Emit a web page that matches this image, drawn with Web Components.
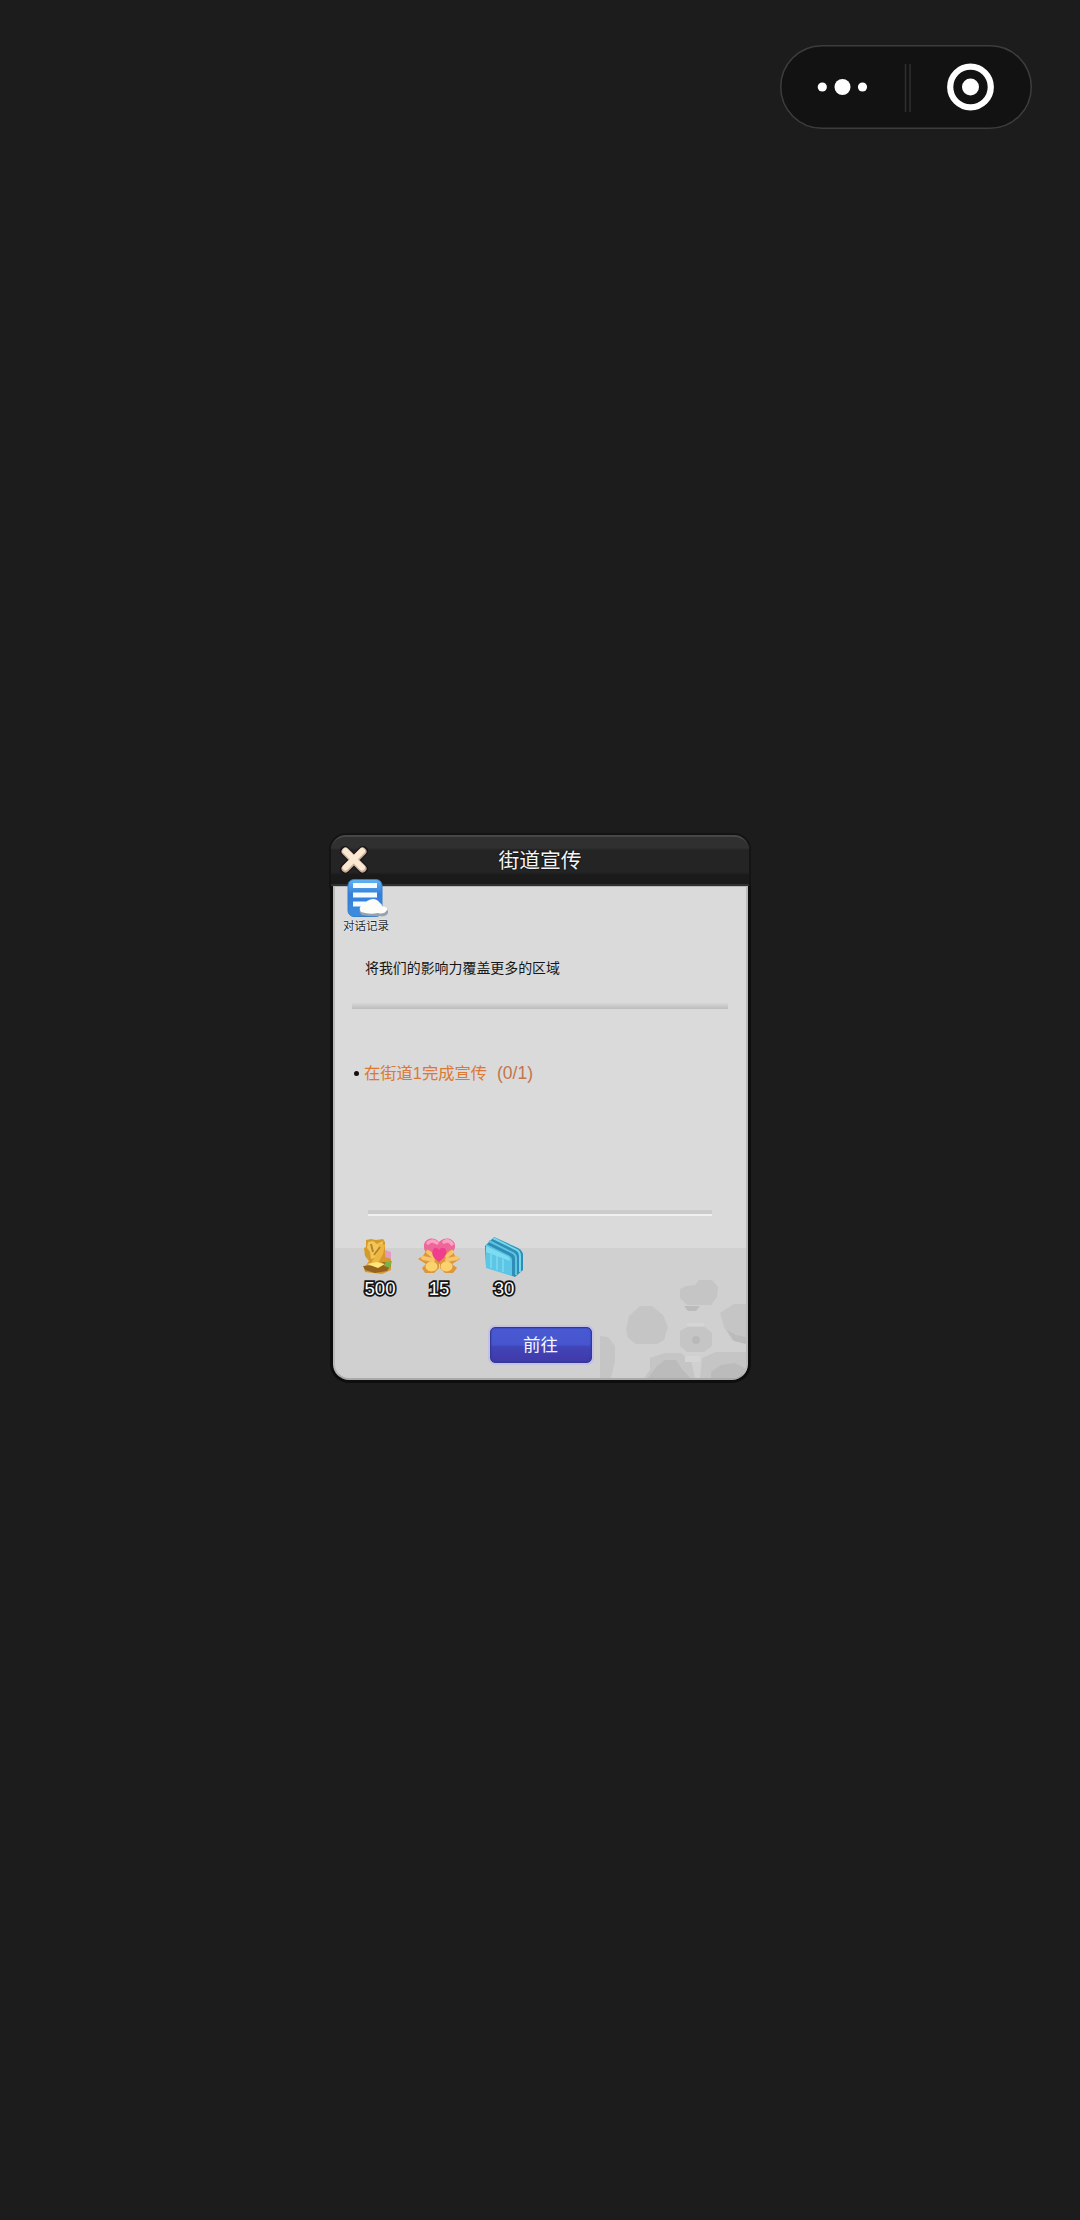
<!DOCTYPE html>
<html lang="zh-CN">
<head>
<meta charset="utf-8">
<title>街道宣传</title>
<style>
html,body{margin:0;background:#1c1c1c}
body{width:1080px;height:2220px;overflow:hidden;font-family:"Liberation Sans","Noto Sans CJK SC",sans-serif}
</style>
</head>
<body>
<quest-screen>
  <mini-capsule slot="top"></mini-capsule>
  <quest-dialog>
    <span slot="title">街道宣传</span>
    <dialog-log slot="log">对话记录</dialog-log>
    <span slot="desc">将我们的影响力覆盖更多的区域</span>
    <quest-goal slot="goal">在街道1完成宣传<span slot="count">(0/1)</span></quest-goal>
    <quest-reward slot="rewards" kind="star" style="width:56px">500</quest-reward>
    <quest-reward slot="rewards" kind="heart" style="width:56px;margin-left:3px">15</quest-reward>
    <quest-reward slot="rewards" kind="book" style="width:56px;margin-left:9px">30</quest-reward>
    <go-button slot="action">前往</go-button>
  </quest-dialog>
</quest-screen>
<script>
const define = (name, html, setup) => customElements.define(name, class extends HTMLElement {
  constructor() {
    super();
    this.attachShadow({mode: "open"}).innerHTML = html;
  }
  connectedCallback() { if (setup) setup(this); }
});

define("quest-screen", `<style>
:host{display:flex;flex-direction:column;align-items:center;width:1080px;height:2220px;background:#1c1c1c}
.top{display:flex;justify-content:flex-end;align-self:stretch;padding:45px 48px 0 0;height:789px}
</style><div class="top"><slot name="top"></slot></div><slot></slot>`);

define("mini-capsule", `<style>
:host{display:block;width:252px;height:84px}
svg{display:block}
</style><svg width="252" height="84" viewBox="0 0 252 84">
<rect x=".75" y=".75" width="250.500" height="82.500" rx="41.250" fill="#121212" stroke="#3d3d3d" stroke-width="1.500"/>
<g fill="#fff"><circle cx="42.300" cy="42" r="4.600"/><circle cx="62.500" cy="42" r="8"/><circle cx="82.500" cy="42" r="4.600"/><circle cx="190.500" cy="42" r="8.500"/></g>
<path d="M125.500 19v48M130 19v48" stroke="#2f2f2f" stroke-width="1.500"/>
<circle cx="190.500" cy="42" r="20.300" fill="none" stroke="#fff" stroke-width="6.200"/></svg>`);

define("quest-dialog", `<style>
:host{display:flex;flex-direction:column;width:418px;height:545px;margin-top:1px}
header{box-sizing:border-box;height:51px;flex:none;display:grid;grid-template-columns:48px 1fr 48px;align-items:center;border-radius:15px 15px 0 0;background:linear-gradient(#303030 0 11px,#242424 13px 35px,#1a1a1a 38px);border-top:2px solid #474747;border-bottom:2px solid #303030;box-shadow:0 0 0 2px #141414;color:#f4f4f4;font-size:20.800px;line-height:28px}
header svg{display:block;margin-left:8px;margin-top:-2px}
.title{text-align:center;text-shadow:0 0 2px #000}
main{box-sizing:border-box;position:relative;isolation:isolate;flex:1;width:415px;margin-left:2px;border:2px solid #b9b9b9;border-top-width:1px;border-bottom-color:#aaa;border-radius:0 0 16px 16px;background:linear-gradient(#dadada 0 361px,#d0d0d0 361px);box-shadow:-3px 0 #0e0e0e,3px 0 #0e0e0e,0 3px #0e0e0e,-2px 2px #0e0e0e,2px 2px #0e0e0e;display:flex;flex-direction:column}
.log{height:72px;padding-left:6px}
.log ::slotted(*){margin-top:-10px}
.desc{height:44px;padding-left:30px;font-size:13.930px;line-height:18px;color:#161616;white-space:nowrap}
.log,.desc,.r1,.r2,.rewards{flex:none;box-sizing:border-box}
.r1{height:6px;width:376px;margin-left:17px;background:linear-gradient(#d6d6d6,#bdbdbd)}
.goal{box-sizing:border-box;height:201px;flex:none;padding:54px 0 0 17px}
.r2{height:6px;width:344px;margin-left:33px;background:#cbcbcb;border-bottom:2px solid #efefef}
.rewards{display:flex;padding:15px 0 0 17px;height:87px}
.action{display:flex;justify-content:center;padding-top:24px}
.art{position:absolute;right:0;bottom:0;z-index:-1;border-bottom-right-radius:14px}
</style>
<header><svg width="30" height="30" viewBox="0 0 30 30"><path d="M6 6L24 24M24 6L6 24" stroke="#18111a" stroke-width="10" stroke-linecap="round"/><path d="M6.500 6.500L23.500 23.500M23.500 6.500L6.500 23.500" stroke="#c6b098" stroke-width="8" stroke-linecap="round"/><path d="M6.500 6L23 22.500M23 6L6.500 22.500" stroke="#fae8d2" stroke-width="6" stroke-linecap="round"/></svg><div class="title"><slot name="title"></slot></div></header>
<main>
<svg class="art" width="150" height="104" viewBox="0 0 150 104"><g fill="#c5c5c5"><path d="M84 15l6-3 9-1 4-5h13l6 7-1 10-6 8H91l-7-7zM30 56l3-14 11-10h12l11 9 5 12-4 13-7 4H40l-8-6zM124 39l14-9h12v40l-14-4-8-13zM84 57l7-4h18l7 6v13l-8 6H91l-7-6z"/><path d="M4 62l8 1 7 9v15l-4 17H4zM54 84l15-5h16l10 8 4 17H48l6-8zM106 84l14-6h30v26h-46z"/></g><circle cx="100" cy="66" r="4" fill="#b9b9b9"/><path d="M88 32h16l-4 5h-8zM131 56l9 5 10 2v7l-12-3zM61 92l8-6h11l6 9 8 9H52zM115 98l10-7 14-2 11 6v9h-35z" fill="#bbb"/><path d="M91 49h17v3H91zM89 82h15v6H89z" fill="#d5d5d5"/></svg>
<div class="log"><slot name="log"></slot></div>
<div class="desc"><slot name="desc"></slot></div>
<div class="r1"></div>
<div class="goal"><slot name="goal"></slot></div>
<div class="r2"></div>
<div class="rewards"><slot name="rewards"></slot></div>
<div class="action"><slot name="action"></slot></div>
</main>`);

define("dialog-log", `<style>
:host{display:flex;flex-direction:column;align-items:center;width:50px;color:#292929;font-size:11.500px;line-height:15px;text-shadow:0 0 1px #fff,0 0 2px #fff;white-space:nowrap}
svg{display:block}
</style><svg width="48" height="42" viewBox="0 0 48 42"><defs><linearGradient id="b" x2="0" y2="1"><stop stop-color="#65b4f4"/><stop offset=".4" stop-color="#347edb"/><stop offset="1" stop-color="#3c8edf"/></linearGradient></defs><rect x="6" y="2.500" width="34" height="37" rx="6" fill="url(#b)" stroke="#347dc8"/><path d="M11 8.500h24M11 18h24M11 27h15" stroke="#f4fcff" stroke-width="5"/><path d="M20 38q-5-4 0-8 4 0 5-4 8-5 13 1 3 2 3 4 6 1 5 5-2 4-8 3-8 1-18-1z" fill="#94a3b2"/><path d="M19 35q-3-4 1-7 4 0 5-4 8-5 13 2 2 1 2 3 6 1 5 4-3 5-9 3-8 2-17-1z" fill="#fffdfa"/></svg><slot></slot>`);

define("quest-goal", `<style>
:host{display:flex;align-items:center;font-size:16.300px;line-height:20px;color:#db7834;white-space:nowrap}
i{width:5px;height:5px;border-radius:50%;background:#111;margin:0 5px 0 2px}
.c{margin-left:10px;color:#c4754b;font-size:17.500px}
</style><i></i><span><slot></slot></span><span class="c"><slot name="count"></slot></span>`);

const rewardArt = {
star: `<g transform="translate(2 1)"><path d="M12 8l5-1 5 1 7-1 2 3v12l6 3v13l-9 4-17-2-1-4 5-7-4-5-1-8 2-1z" fill="#d69a2a"/><path d="M14 10l5-1 4 3 6-3-1 9-4 7-7 2-1-7-3-4z" fill="#f0c65a"/><path d="M25 12l6 1-2 9-6 11-6-2 6-9z" fill="#edb740"/><path d="M17 12l2 8M26 15l-6 8" stroke="#bb8428" stroke-width="2"/><path d="M9 34l11-1 10-3 7 3-4 6-12 2-10-3z" fill="#96621f"/><path d="M13 32l10-2 8 2-7 4z" fill="#ffe879"/><path d="M31 18l6 2v7l-6-2z" fill="#e39ac0"/><path d="M32 30l6-1-2 7-6-2z" fill="#78b248"/></g>`,
heart: `<path d="M28 33C17 25 12 20 13 14c1-7 10-9 15-3 6-6 15-4 16 3 1 6-6 12-16 19z" fill="#ee669a"/><path d="M17 12q4-4 9 0M33 11q5-3 8 2" fill="none" stroke="#fba1c2" stroke-width="3.500" stroke-linecap="round"/><path d="M16 18l6 3 3 6 3 3v7l-5 5h-9l-3-5 4-4-8-5 5-3z" fill="#dc963d"/><path d="M41 18l-6 3-4 6-2 3v7l5 5h8l4-5-5-4 8-5-5-3z" fill="#dc963d"/><path d="M17 21l5 4M12 27l10 2M41 21l-5 4M46 27l-10 2" stroke="#f8c56d" stroke-width="4" stroke-linecap="round"/><ellipse cx="20.500" cy="35.500" rx="6" ry="5" fill="#fbd26c"/><ellipse cx="35.500" cy="35.500" rx="6" ry="5" fill="#fbd26c"/><path d="M28 31c-6-4-8-8-6-12 2-4 5-2 6 0 2-3 6-3 7 0 2 4-2 8-7 12z" fill="#ef3f8c"/>`,
book: `<path d="M9 15l9-9 24 11q5 3 5 7v15l-8 7-29-11z" fill="#2e8eb8"/><path d="M17 7l24 12q3 2 3 6v16" fill="none" stroke="#74d7ed" stroke-width="2"/><path d="M13 10l24 12q3 2 3 5v17" fill="none" stroke="#60c4df" stroke-width="2"/><path d="M10 13l22 11q4 2 4 5v16L10 37z" fill="#5bc6e6"/><path d="M10 15l21 10q3 1 3 5L10 21z" fill="#7fdcf0"/><path d="M15 22v15M21 25v14M27 28v13" stroke="#78d4eb" stroke-width="2"/>`};

define("quest-reward", `<style>
:host{display:flex;flex-direction:column;align-items:center;font:400 18.500px/20px "Liberation Sans",sans-serif;color:#fff;-webkit-text-stroke:3.500px #151515;paint-order:stroke fill}
svg{display:block;margin-bottom:2px;-webkit-text-stroke:0}
</style><svg width="56" height="46" viewBox="0 0 56 46"></svg><slot></slot>`,
el => { el.shadowRoot.querySelector("svg").innerHTML = rewardArt[el.getAttribute("kind")]; });

define("go-button", `<style>
:host{box-sizing:border-box;display:flex;align-items:center;justify-content:center;width:102px;height:36px;border:1px solid #323897;border-radius:5px;background:linear-gradient(#4859d2 0,#4756cf 48%,#4145b7 55%,#4139aa);box-shadow:0 0 0 2px #c6c0e2,inset 0 0 2px #2738a0;color:#f7f5ff;font-size:17.500px;line-height:22px}
</style><slot></slot>`);
</script>
</body>
</html>
